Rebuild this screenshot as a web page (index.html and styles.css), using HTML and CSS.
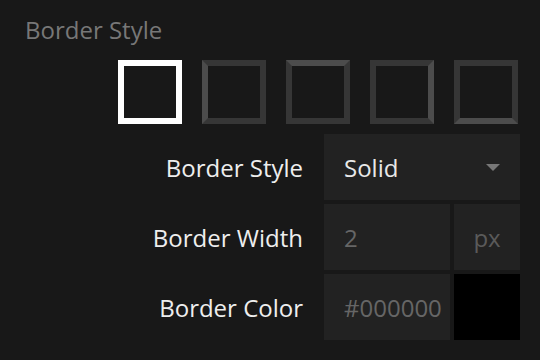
FILE: index.html
```html
<!DOCTYPE html>
<html lang="en">
<head>
    <meta charset="UTF-8">
    <meta name="viewport" content="width=device-width, initial-scale=1.0">
    <title>Border Style</title>
    <link rel="stylesheet" href="styles.css">
</head>
<body>

    <div class="panel">
        <h2 class="panel-title">Border Style</h2>

        <!-- Preset swatches -->
        <div class="presets">
            <div class="preset selected"></div>
            <div class="preset side-left"></div>
            <div class="preset side-top"></div>
            <div class="preset side-right"></div>
            <div class="preset side-bottom"></div>
        </div>

        <div class="fields">
            <div class="field">
                <label class="field-label">Border Style</label>
                <div class="select">
                    <span class="value">Solid</span>
                    <span class="caret"></span>
                </div>
            </div>
            <div class="field">
                <label class="field-label">Border Width</label>
                <div class="input muted">2</div>
                <div class="unit">px</div>
            </div>
            <div class="field">
                <label class="field-label">Border Color</label>
                <div class="input muted">#000000</div>
                <div class="color-chip"></div>
            </div>
        </div>
    </div>

</body>
</html>
```

FILE: styles.css
```css
body {
    font-family: "Open Sans", "DejaVu Sans", sans-serif;
    background-color: #181818;
    margin: 0;
    padding: 0;
    width: 540px;
    height: 360px;
    overflow: hidden;
}
.panel {
    padding: 0 20px 0 25px;
}
.panel-title {
    margin: 0;
    padding-top: 14px;
    height: 32px;
    font-size: 24px;
    font-weight: normal;
    line-height: 32px;
    color: #777;
}
.presets {
    display: flex;
    justify-content: flex-end;
    gap: 20px;
    margin-top: 14px;
    padding-right: 2px;
}
.preset {
    width: 52px;
    height: 52px;
    border: 6px solid #363636;
    background-color: #181818;
}
.preset.selected {
    border-color: #fff;
}
.side-left {
    border-left-color: #4c4c4c;
}
.side-top {
    border-top-color: #4c4c4c;
}
.side-right {
    border-right-color: #4c4c4c;
}
.side-bottom {
    border-bottom-color: #4c4c4c;
}
.fields {
    display: flex;
    flex-direction: column;
    gap: 4px;
    margin-top: 10px;
}
.field {
    display: flex;
    align-items: center;
    gap: 4px;
    height: 66px;
}
.field-label {
    width: 278px;
    margin-right: 17px;
    text-align: right;
    font-size: 24px;
    color: #eee;
}
.select {
    height: 66px;
    padding: 0 20px;
    box-sizing: border-box;
    width: 196px;
    display: flex;
    align-items: center;
    justify-content: space-between;
    background-color: #222;
    font-size: 24px;
    color: #e8e8e8;
}
.caret {
    width: 0;
    height: 0;
    border-left: 7px solid transparent;
    border-right: 7px solid transparent;
    border-top: 7px solid #777;
}
.input {
    width: 126px;
    height: 66px;
    box-sizing: border-box;
    padding-left: 20px;
    display: flex;
    align-items: center;
    background-color: #222;
    font-size: 24px;
}
.muted {
    color: #666;
}
.unit {
    width: 66px;
    height: 66px;
    display: flex;
    align-items: center;
    justify-content: center;
    background-color: #222;
    font-size: 24px;
    color: #5a5a5a;
}
.color-chip {
    width: 66px;
    height: 66px;
    background-color: #000;
}
```
